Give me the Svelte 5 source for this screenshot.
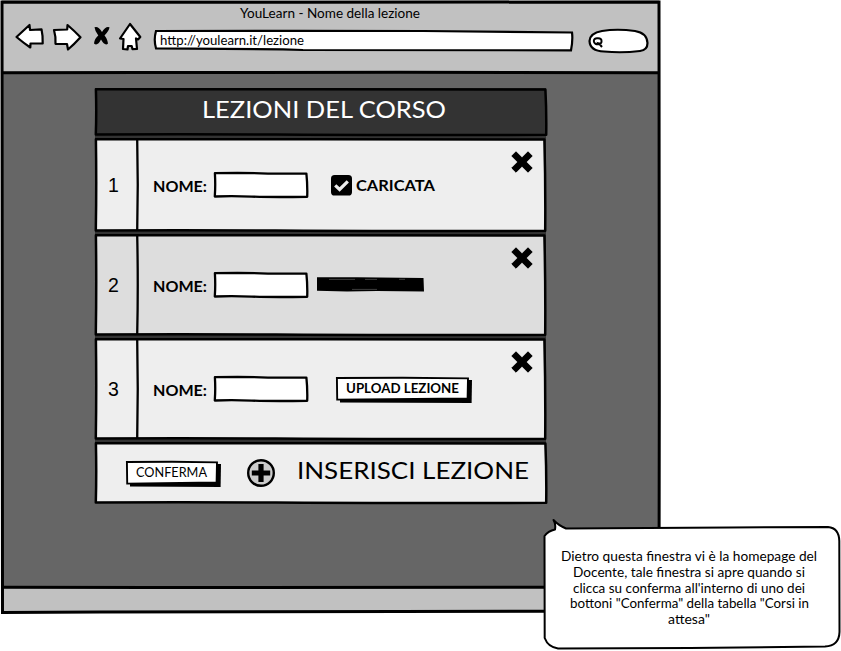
<script>
  const rows = [
    { n: 1, h: 94, state: 'done' },
    { n: 2, h: 102, state: 'progress' },
    { n: 3, h: 102, state: 'upload' }
  ];
  const note = [
    ['Dietro questa finestra vi è la homepage del', 256],
    ['Docente, tale finestra si apre quando si', 232],
    ["clicca su conferma all'interno di uno dei", 232],
    ['bottoni "Conferma" della tabella "Corsi in', 239],
    ['attesa"', 42]
  ];
  // Slightly uneven outline, like a hand-ruled rectangle
  function rough(w, h) {
    return `M.9 1.2 Q${w * 0.3} .8 ${w * 0.5} 1.3 T${w - 1.6} 1.6 Q${w - 0.4} ${h * 0.5} ${w - 0.8} ${h - 1.2} Q${w * 0.6} ${h - 0.7} ${w * 0.4} ${h - 1.4} T.8 ${h - 1.5} Q1.6 ${h * 0.5} .9 1.2Z`;
  }
</script>

{#snippet label(text, w, size, kind = '')}
  <svg class="label {kind}" width={w} height={size} viewBox="0 0 {w} {size}">
    <text x="0" y={size * 0.86} font-size={size} textLength={w} lengthAdjust="spacingAndGlyphs">{text}</text>
  </svg>
{/snippet}

{#snippet frame(w, h, fill, sw = 2.5)}
  <svg class="frame" width={w} height={h} viewBox="0 0 {w} {h}">
    <path d={rough(w, h)} {fill} stroke="#000" stroke-width={sw} stroke-linejoin="round" />
  </svg>
{/snippet}

{#snippet buttonFrame(w)}
  <svg class="frame" width={w + 3} height="26" viewBox="0 0 {w + 3} 26">
    <path d="M4 5 L{w - 3} 3 L{w + 3} 3 L{w + 2.6} 26 L4 25.6Z" />
    <path d="M.9 1 L{w * 0.5} .8 L{w - 1} 1.4 L{w - 1.4} 21.5 L{w * 0.4} 22.3 L1.2 22.6Z" fill="#fff" stroke="#000" stroke-width="1.9" />
  </svg>
{/snippet}

<main>
  <section class="window">
    <header>
      <div class="title">{@render label('YouLearn - Nome della lezione', 180, 13)}</div>
      <div class="toolbar">
        <svg class="nav" width="138" height="34" viewBox="12 20 138 34">
          <g fill="#fff" stroke="#000" stroke-width="2.2" stroke-linejoin="round">
            <path d="M16.5 37 L29.5 25 L30 30 L41.5 29.3 Q43 36 42.7 43.5 L30.5 43.5 L30.3 47.5 Q23 42.5 16.5 37Z" />
            <path d="M54 30 L67.2 29.5 L67.5 25 Q74 30.5 80.5 37.3 Q74 44.5 68 49.5 L67 44 L55.5 43.8 Q56 37 54 30Z" />
            <path d="M130 24 L140.3 37 L138 39.5 L136 38.5 L137 49 L132.5 49.2 L131.7 46 L128 46 L127.5 49.5 L123 49 L123.5 39 L120 38.5Z" />
          </g>
          <path d="M94.5 27.3 Q98 25.5 102 32 Q106 25.5 109.5 27.3 Q109 31 104.5 35.5 Q107 38 108 43.5 Q105 46.5 101 39.5 Q97.5 46.5 94 43.5 Q94.5 38.5 98.3 35.5 Q95 31.5 94.5 27.3Z" />
        </svg>
        <div class="address">
          <svg class="frame" width="421" height="23" viewBox="0 0 421 23">
            <path d="M3 2 L150 1.8 L270 2 L419 3.5 Q420 11 418 21.3 L150 21 L130 20.3 L3 19.3 Q.5 11 3 2Z" fill="#fff" stroke="#000" stroke-width="2.2" />
          </svg>
          {@render label('http://youlearn.it/lezione', 144, 13)}
        </div>
        <svg class="search" width="62" height="26" viewBox="587 28 62 26">
          <path d="M589.5 41 Q590 33 602 31 Q617 28.5 635 31 Q647 33 647.5 43 Q647.5 50 640 51 Q622 53.2 604 51.5 Q590 51 589.5 41Z" fill="#fff" stroke="#000" stroke-width="2.2" />
          <path d="M600 44 Q594 45 593.8 41 Q594 38 597.5 38.3 Q602 38 601.5 42 Q601 44 599 43.5 L602 47" fill="none" stroke="#000" stroke-width="2" />
        </svg>
      </div>
    </header>

    <div class="body">
      <div class="table">
        <div class="heading">
          {@render frame(452, 48, '#333')}
          {@render label('LEZIONI DEL CORSO', 244, 24, 'light')}
        </div>
        {#each rows as row}
          <div class="row" style:height="{row.h}px">
            {@render frame(451, row.h, row.n === 2 ? '#ddd' : '#eee')}
            <div class="number">
              <svg class="label digit" width="12" height="24"><text x="0" y="18.4" font-size="19.5">{row.n}</text></svg>
            </div>
            <svg class="divider" width="4" height={row.h} viewBox="0 0 4 {row.h}">
              <path d="M1.2 1 Q2.3 {row.h / 2} 1.2 {row.h - 1}" fill="none" stroke="#000" stroke-width="2.3" />
            </svg>
            <div class="content">
              {@render label('NOME:', 54, 16, 'bold low')}
              <div class="field">{@render frame(94, 26, '#fff', 2.3)}</div>
              {#if row.state === 'done'}
                <svg class="check" width="21" height="21" viewBox="0 0 21 21">
                  <rect width="21" height="20.5" rx="3.6" />
                  <path d="M4.2 10.3 L8.6 14.5 L16.8 6.4" fill="none" stroke="#eee" stroke-width="3.2" />
                </svg>
                {@render label('CARICATA', 79, 15.5, 'bold low')}
              {:else if row.state === 'progress'}
                <svg class="bar" width="107" height="15" viewBox="0 0 107 15">
                  <path d="M0 .3 L40 .2 L106.5 1 L107 14.5 L60 14 L30 14.4 L0 13.7Z" />
                  <path d="M12 2.4H38 M48 2.4H60 M82 2.3H88 M35 12.4H60" fill="none" stroke="#666" stroke-width=".6" />
                </svg>
              {:else}
                <div class="button upload">
                  {@render buttonFrame(133)}
                  {@render label('UPLOAD LEZIONE', 113, 13.5, 'bold')}
                </div>
              {/if}
            </div>
            <svg class="remove" width="22" height="22" viewBox="0 0 22 22">
              <path d="M5 .8 L11 6.8 L17 .8 L21.2 5 L15.2 11 L21.2 17 L17 21.2 L11 15.2 L5 21.2 L.8 17 L6.8 11 L.8 5Z" stroke="#000" stroke-width="1" stroke-linejoin="round" />
            </svg>
          </div>
        {/each}
        <div class="actions">
          {@render frame(452, 62, '#eee')}
          <div class="button confirm">
            {@render buttonFrame(92)}
            {@render label('CONFERMA', 71, 14)}
          </div>
          <svg class="add" width="28" height="28" viewBox="0 0 28 28">
            <circle cx="14" cy="14" r="12.8" fill="#ccc" stroke="#000" stroke-width="2.4" />
            <path d="M14 4.9V23.1 M4.8 14H23.2" stroke="#000" stroke-width="5.2" />
          </svg>
          {@render label('INSERISCI LEZIONE', 232, 24)}
        </div>
      </div>
    </div>
    <footer></footer>
    <svg class="outline" width="662" height="615" viewBox="0 0 662 615">
      <g fill="none" stroke="#000" stroke-width="3">
        <path d="M2 2 L300 2.3 L659 2 Q658.4 200 659.3 400 L659 611 L400 611.5 L100 612 L2.5 612.5 Q3 300 2 2Z" />
        <path d="M2 72.8 L140 72.6 L400 72.2 L659 72.7 M2 587.3 L150 587.5 L659 587.2" />
      </g>
    </svg>
  </section>

  <aside>
    <svg class="balloon" width="299" height="134" viewBox="542 517 299 134">
      <path d="M566 528.5 L730 527.5 L828 527 Q839 528 839.3 541 L839.5 632 Q839 646 825 646.5 L690 648 L558 648.5 Q548 647 544.7 638 L544.5 536 Q548 531 555 529.5 Q556 524 553.5 520 Q558 525 566 528.5Z" fill="#fff" stroke="#000" stroke-width="2" stroke-linejoin="round" />
    </svg>
    {#each note as [line, w]}
      <div class="line">{@render label(line, w, 13)}</div>
    {/each}
  </aside>
</main>

<style>
  :global(body) { background: #fff; }
  main { position: relative; width: 841px; height: 651px; overflow: hidden; font-family: Lato, 'Open Sans', sans-serif; }
  .window { position: relative; width: 660px; height: 613px; display: flex; flex-direction: column; }
  .window > header { box-sizing: border-box; height: 73px; margin: 0 1px 0 2px; padding-top: 7px; background: #c1c1c1; }
  .title { display: flex; padding-left: 238px; height: 13px; }
  .toolbar { display: flex; padding-left: 10px; }
  .nav { flex: none; }
  .address { position: relative; display: flex; box-sizing: border-box; width: 421px; height: 23px; margin: 9px 0 0 3px; padding: 5px 0 0 7px; }
  .search { margin: 8px 0 0 13px; flex: none; }
  .body { flex: 1; margin: 0 1px 0 2px; padding: 15px 0 0 93px; background: #666; }
  .table { display: flex; flex-direction: column; gap: 2px; width: 451px; background: #333; height: 415px; }
  .heading { position: relative; display: flex; box-sizing: border-box; height: 48px; padding: 9px 0 0 107px; }
  .row { position: relative; display: flex; align-items: center; }
  .number { width: 41px; display: flex; justify-content: center; padding: 3px 3px 0 0; box-sizing: border-box; }
  .digit { font-family: 'Liberation Sans', Arial, sans-serif; }
  .divider { position: relative; flex: none; }
  .content { position: relative; display: flex; align-items: center; width: 360px; padding-left: 13px; }
  .field { position: relative; width: 94px; height: 26px; margin-left: 7px; }
  .check { margin: 2px 4px 0 23px; }
  .bar { margin-left: 9px; }
  .button { position: relative; box-sizing: border-box; display: flex; height: 23px; padding: 4px 0 0 10px; }
  .upload { width: 133px; margin-left: 28px; }
  .remove { position: relative; align-self: flex-start; margin: 13px 0 0 -2px; }
  .actions { position: relative; display: flex; box-sizing: border-box; height: 62px; padding-left: 31px; }
  .confirm { width: 92px; margin-top: 19px; }
  .add { position: relative; margin: 17px 22px 0 29px; }
  .actions > :global(.label) { margin-top: 16px; }
  footer { height: 25px; margin: 0 1px 0 2px; background: #c1c1c1; }
  .label { position: relative; display: block; overflow: visible; flex: none; fill: #000; }
  .light { fill: #fff; }
  .bold { font-weight: 700; }
  .low { margin-top: 2px; }
  .frame { position: absolute; left: 0; top: 0; overflow: visible; }
  .outline { position: absolute; left: 0; top: 0; pointer-events: none; }
  aside { position: absolute; left: 542px; top: 517px; width: 299px; height: 134px; box-sizing: border-box; padding-top: 33px; }
  .balloon { position: absolute; left: 0; top: 0; }
  .line { position: relative; display: flex; justify-content: center; height: 15.8px; padding-right: 5px; }
</style>
